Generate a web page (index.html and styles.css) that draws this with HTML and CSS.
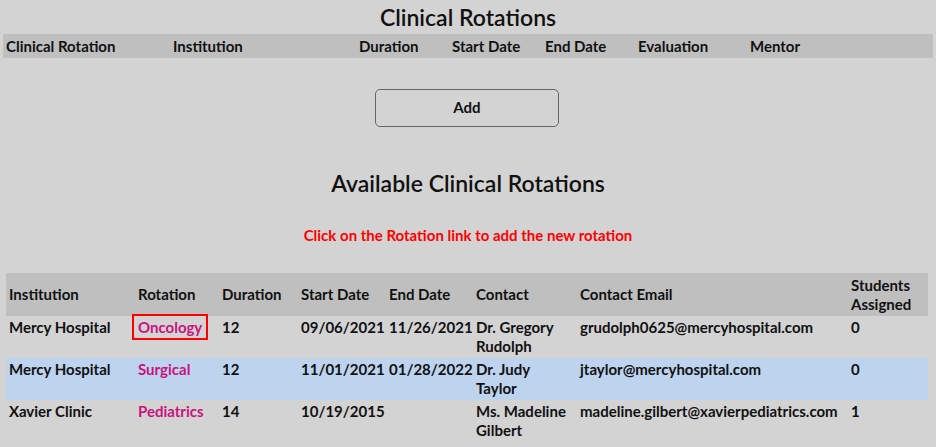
FILE: index.html
```html
<!DOCTYPE html>
<html>
<head>
<meta charset="utf-8">
<link rel="stylesheet" href="styles.css">
</head>
<body>
<h1 class="title">Clinical Rotations</h1>
<table class="grid my">
  <colgroup>
    <col style="width:167px"><col style="width:186px"><col style="width:93px"><col style="width:93px"><col style="width:93px"><col style="width:112px"><col>
  </colgroup>
  <thead>
    <tr><th>Clinical Rotation</th><th>Institution</th><th>Duration</th><th>Start Date</th><th>End Date</th><th>Evaluation</th><th>Mentor</th></tr>
  </thead>
</table>
<div class="actions"><button class="add">Add</button></div>
<h2 class="title sub">Available Clinical Rotations</h2>
<p class="hint">Click on the Rotation link to add the new rotation</p>
<table class="grid avail">
  <colgroup>
    <col style="width:129px"><col style="width:84px"><col style="width:79px"><col style="width:88px"><col style="width:87px"><col style="width:104px"><col style="width:271px"><col>
  </colgroup>
  <thead>
    <tr><th>Institution</th><th>Rotation</th><th>Duration</th><th>Start Date</th><th>End Date</th><th>Contact</th><th>Contact Email</th><th>Students Assigned</th></tr>
  </thead>
  <tbody>
    <tr><td>Mercy Hospital</td><td><a class="rot focused" href="#">Oncology</a></td><td>12</td><td>09/06/2021</td><td>11/26/2021</td><td class="contact">Dr. Gregory Rudolph</td><td>grudolph0625@mercyhospital.com</td><td>0</td></tr>
    <tr class="hl"><td>Mercy Hospital</td><td><a class="rot" href="#">Surgical</a></td><td>12</td><td>11/01/2021</td><td>01/28/2022</td><td class="contact">Dr. Judy Taylor</td><td>jtaylor@mercyhospital.com</td><td>0</td></tr>
    <tr><td>Xavier Clinic</td><td><a class="rot" href="#">Pediatrics</a></td><td>14</td><td>10/19/2015</td><td></td><td class="contact">Ms. Madeline Gilbert</td><td>madeline.gilbert@xavierpediatrics.com</td><td>1</td></tr>
  </tbody>
</table>
</body>
</html>
```
FILE: styles.css
```css
html, body {
  margin: 0;
  background: #d3d3d3;
  color: #111;
  font-family: Lato, "Open Sans", sans-serif;
}
.title {
  margin: 0;
  padding-top: 5px;
  font-size: 23px;
  line-height: 24px;
  font-weight: 600;
  text-align: center;
}
.grid {
  border-collapse: collapse;
  table-layout: fixed;
  font-size: 15px;
  font-weight: 700;
}
.my {
  margin: 5px 3px 0;
  width: 930px;
}
.my th {
  background: #bfbfbf;
  height: 24px;
  padding: 0 3px;
  text-align: left;
}
.actions {
  display: flex;
  justify-content: center;
  padding-top: 31px;
  padding-right: 2px;
}
.add {
  width: 184px;
  height: 38px;
  padding: 0 0 3px;
  border: 1px solid #666;
  border-radius: 5px;
  background: transparent;
  font-family: inherit;
  font-size: 15px;
  font-weight: 700;
  color: #111;
}
.sub {
  padding-top: 44px;
}
.hint {
  margin: 0;
  padding-top: 31px;
  color: #f00;
  text-align: center;
  font-size: 15px;
  line-height: 18px;
  font-weight: 700;
}
.avail {
  margin: 29px 6px 0;
  width: 922px;
}
.avail th {
  background: #bfbfbf;
  height: 43px;
  padding: 0 3px;
  text-align: left;
  vertical-align: middle;
  line-height: 19px;
}
.avail td {
  height: 38px;
  padding: 2px 3px;
  vertical-align: top;
  line-height: 19px;
}
.avail td.contact {
  padding-right: 10px;
}
.avail tr.hl td {
  background: #bdd3ee;
}
.rot {
  color: #c8137f;
  text-decoration: none;
}
.focused {
  outline: 2px solid #f00;
  outline-offset: 2px;
  padding: 0 2px;
  margin: 0 -2px;
}
```
